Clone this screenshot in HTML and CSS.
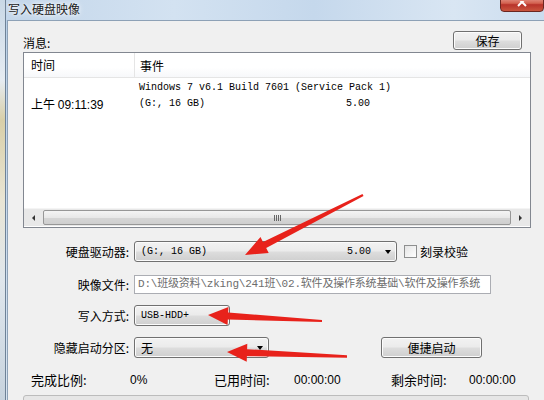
FILE: index.html
```html
<!DOCTYPE html>
<html lang="zh-CN">
<head>
  <meta charset="UTF-8">
  <meta name="viewport" content="width=device-width, initial-scale=1.0">
  <title>写入硬盘映像</title>
  <link rel="stylesheet" href="styles.css">
</head>
<body>
  <div class="screen">
    <div class="behind"></div>

    <div class="window">
      <div class="titlebar">
        <span class="title">写入硬盘映像</span>
        <span class="close">
          <svg width="10" height="6" viewBox="0 0 10 6"><path d="M1 -3 L9 5 M9 -3 L1 5" stroke="#fff" stroke-width="2"/></svg>
        </span>
      </div>

      <div class="client">
        <div class="msg-head">
          <span class="msg-label">消息:</span>
          <button class="btn save">保存</button>
        </div>

        <div class="log">
          <div class="log-head">
            <div class="col-time">时间</div>
            <div class="col-event">事件</div>
          </div>
          <div class="log-row">
            <div class="col-time"></div>
            <div class="col-event mono">Windows 7 v6.1 Build 7601 (Service Pack 1)</div>
          </div>
          <div class="log-row">
            <div class="col-time"><span class="cjk">上午</span> <span class="num">09:11:39</span></div>
            <div class="col-event mono"><span class="drive-name">(G:, 16 GB)</span>5.00</div>
          </div>

          <div class="hscroll">
            <div class="sb-btn"><span class="tri-left"></span></div>
            <div class="sb-thumb"><span class="grip"></span></div>
            <div class="sb-btn"><span class="tri-right"></span></div>
          </div>
        </div>

        <div class="form">
          <div class="form-row">
            <label class="form-label">硬盘驱动器:</label>
            <div class="combo drive">
              <span class="mono">(G:, 16 GB)</span>
              <span class="mono combo-value">5.00</span>
              <span class="drop"></span>
            </div>
            <span class="check"></span>
            <span class="check-label">刻录校验</span>
          </div>

          <div class="form-row row-image">
            <label class="form-label">映像文件:</label>
            <div class="field">D:\班级资料\zking\241班\02.软件及操作系统基础\软件及操作系统</div>
          </div>

          <div class="form-row row-write">
            <label class="form-label">写入方式:</label>
            <div class="combo write">
              <span class="mono">USB-HDD+</span>
              <span class="drop"></span>
            </div>
          </div>

          <div class="form-row row-hide">
            <label class="form-label">隐藏启动分区:</label>
            <div class="combo hide">
              <span class="cjk">无</span>
              <span class="drop"></span>
            </div>
            <button class="btn quick">便捷启动</button>
          </div>
        </div>

        <div class="stats">
          <span class="stat-label">完成比例:</span>
          <span class="num">0%</span>
          <span class="stat-label">已用时间:</span>
          <span class="num">00:00:00</span>
          <span class="stat-label">剩余时间:</span>
          <span class="num">00:00:00</span>
        </div>

        <div class="progress"></div>
      </div>
    </div>

    <!-- red annotation arrows drawn on top of the screenshot -->
    <svg class="arrows" width="544" height="400" viewBox="0 0 544 400">
      <polygon points="362.5,194.1 263,241.9 260.5,237 245,255 268.7,253 266.2,248.1 363.5,195.9" />
      <polygon points="322,320 228.2,312.5 228.5,307 208,315 227.5,325 227.8,319.5 322,322" />
      <polygon points="347,355.2 247.1,349.2 247.3,343.7 227,352 246.7,361.7 246.9,356.2 347,357.8" />
    </svg>
  </div>
</body>
</html>
```

FILE: styles.css
```css
body {
  margin: 0;
  padding: 0;
  background: #f0f0f0;
  font-family: "Noto Sans CJK SC", sans-serif;
  font-size: 12px;
  color: #000;
}

.screen {
  position: relative;
  display: flex;
  width: 544px;
  height: 400px;
  overflow: hidden;
}

.behind {
  flex: 0 0 5px;
  background: linear-gradient(180deg, #c9d8e6 0%, #e6ecf2 20%, #d8cfa8 30%, #e9e5d4 50%, #dfe6ec 70%, #c7d3de 100%);
  border-right: 1px solid #6f8296;
}

.window {
  flex: 0 0 560px;
  display: flex;
  flex-direction: column;
  min-height: 0;
  background: linear-gradient(180deg, #b8cfe7 0%, #cadcef 60%, #d7e4f1 100%);
}

/* title bar */

.titlebar {
  flex: 0 0 20px;
  height: 20px;
  display: flex;
  align-items: flex-start;
  position: relative;
  background: linear-gradient(90deg, #c3d6ea 0%, #d3e2f1 30%, #c5d8ec 55%, #d9e6f3 80%, #c8daed 100%);
}

.title {
  margin: 0 0 0 2px;
  font-size: 12px;
  line-height: 17px;
  color: #1a1a1a;
  text-shadow: 0 0 6px #fff, 0 0 3px #fff;
}

.close {
  position: absolute;
  left: 494px;
  top: -4px;
  width: 42px;
  height: 14px;
  border: 1px solid #6b2620;
  border-radius: 0 0 4px 4px;
  background: linear-gradient(180deg, #e8a196 0%, #d3614f 45%, #b8332a 55%, #c9553e 100%);
  display: flex;
  justify-content: center;
  align-items: flex-start;
}

.close svg {
  margin-top: 4px;
}

/* client area */

.client {
  flex: 1 1 auto;
  min-height: 0;
  overflow: hidden;
  margin-left: 1px;
  background: #f0f0f0;
  border-top: 1px solid #8da1b6;
  border-left: 1px solid #8da1b6;
  padding-left: 15px;
}

.msg-head {
  display: flex;
  align-items: flex-end;
  width: 499px;
  height: 19px;
  margin-top: 10px;
}

.msg-label {
  line-height: 14px;
}

.btn {
  font-family: "Noto Sans CJK SC", sans-serif;
  font-size: 12px;
  line-height: 14px;
  color: #000;
  padding: 0;
  border: 1px solid #707070;
  border-radius: 3px;
  background: linear-gradient(180deg, #f2f2f2 0%, #ebebeb 48%, #dddddd 52%, #cfcfcf 100%);
  box-shadow: inset 0 0 0 1px #fcfcfc;
}

.save {
  margin-left: auto;
  width: 69px;
  height: 19px;
}

/* message list */

.log {
  width: 506px;
  height: 174px;
  margin-top: 2px;
  border: 1px solid #828790;
  background: #fff;
  display: flex;
  flex-direction: column;
}

.log-head {
  display: flex;
  flex: 0 0 24px;
  align-items: center;
  border-bottom: 1px solid #e5e5e5;
  background: linear-gradient(180deg, #ffffff 0%, #ffffff 60%, #f7f8fa 100%);
}

.log-head .col-time {
  border-right: 1px solid #e5e5e5;
  height: 24px;
  line-height: 24px;
}

.col-time {
  flex: 0 0 103px;
  padding-left: 7px;
  white-space: nowrap;
}

.col-event {
  padding-left: 5px;
  white-space: nowrap;
}

.log-row {
  display: flex;
  align-items: center;
  flex: 0 0 15px;
}

.log-head + .log-row {
  margin-top: 2px;
}

.mono {
  font-family: "Liberation Mono", "Noto Sans CJK SC", monospace;
  font-size: 10px;
}

.num {
  font-family: "Liberation Sans", sans-serif;
  font-size: 12px;
}

.cjk {
  font-family: "Noto Sans CJK SC", sans-serif;
  font-size: 12px;
}

.drive-name {
  display: inline-block;
  width: 207px;
}

.hscroll {
  margin-top: auto;
  margin-bottom: 1px;
  flex: 0 0 17px;
  display: flex;
  background: #e8e8e8;
  border-top: 1px solid #f4f4f4;
}

.sb-btn {
  flex: 0 0 19px;
  display: flex;
  align-items: center;
  justify-content: center;
}

.tri-left {
  width: 0;
  height: 0;
  border-top: 3px solid transparent;
  border-bottom: 3px solid transparent;
  border-right: 3px solid #333;
}

.tri-right {
  width: 0;
  height: 0;
  border-top: 3px solid transparent;
  border-bottom: 3px solid transparent;
  border-left: 3px solid #333;
}

.sb-thumb {
  flex: 1;
  margin: 1px 0;
  border: 1px solid #979797;
  border-radius: 2px;
  background: linear-gradient(180deg, #f4f4f4 0%, #e8e8e8 50%, #d6d6d6 51%, #cfcfcf 100%);
  display: flex;
  align-items: center;
  justify-content: center;
}

.grip {
  width: 7px;
  height: 6px;
  background: repeating-linear-gradient(90deg, #666 0 1px, transparent 1px 2px);
}

/* form rows */

.form {
  margin-top: 13px;
}

.form-row {
  display: flex;
  align-items: center;
  height: 21px;
}

.row-image {
  height: 19px;
  margin-top: 13px;
}

.row-write {
  margin-top: 11px;
}

.row-hide {
  margin-top: 11px;
}

.form-label {
  flex: 0 0 106px;
  text-align: right;
  line-height: 14px;
  margin-right: 5px;
}

.combo {
  height: 19px;
  display: flex;
  align-items: center;
  padding: 0 5px 0 6px;
  border: 1px solid #707070;
  border-radius: 3px;
  background: linear-gradient(180deg, #f2f2f2 0%, #ebebeb 48%, #dddddd 52%, #cfcfcf 100%);
  box-shadow: inset 0 0 0 1px #fbfbfb;
}

.drive {
  width: 250px;
}

.write {
  width: 83px;
}

.hide {
  width: 122px;
}

.combo-value {
  margin-left: auto;
  margin-right: 14px;
}

.drop {
  margin-left: auto;
  width: 0;
  height: 0;
  border-left: 3.5px solid transparent;
  border-right: 3.5px solid transparent;
  border-top: 4px solid #000;
}

.combo-value + .drop {
  margin-left: 0;
}

.check {
  margin-left: 7px;
  width: 11px;
  height: 11px;
  border: 1px solid #8e8f8f;
  background: linear-gradient(135deg, #e4e4e4 0%, #ffffff 100%);
}

.check-label {
  margin-left: 3px;
  line-height: 14px;
}

.field {
  width: 352px;
  height: 17px;
  padding-left: 3px;
  border: 1px solid #abadb3;
  background: #fff;
  color: #6d6d6d;
  font-family: "Liberation Mono", "Noto Sans CJK SC", monospace;
  font-size: 11px;
  letter-spacing: -0.2px;
  line-height: 17px;
  white-space: nowrap;
  overflow: hidden;
}

.quick {
  margin-left: 112px;
  width: 101px;
  height: 21px;
}

/* bottom status */

.stats {
  display: grid;
  grid-template-columns: 99px 84px 80px 97px 78px auto;
  align-items: center;
  height: 14px;
  margin: 15px 0 0 8px;
}

.stat-label {
  font-size: 13px;
  line-height: 14px;
}

.progress {
  margin-top: 8px;
  width: 504px;
  height: 16px;
  border: 1px solid #bcbcbc;
  border-radius: 3px;
  background: #e6e6e6;
}

.arrows {
  position: absolute;
  left: 0;
  top: 0;
  pointer-events: none;
}

.arrows polygon {
  fill: #e8221b;
}
```
